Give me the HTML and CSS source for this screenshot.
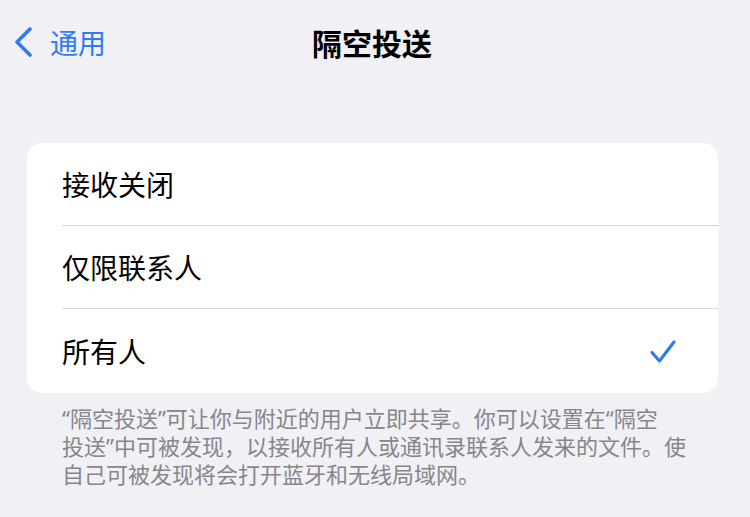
FILE: index.html
```html
<!DOCTYPE html>
<html lang="zh-CN">
<head>
  <meta charset="UTF-8" />
  <meta name="viewport" content="width=device-width, initial-scale=1.0" />
  <title>隔空投送</title>
  <link rel="stylesheet" href="styles.css">
</head>
<body>
  <header class="nav">
    <a class="back" href="#">
      <svg class="chevron" viewBox="0 0 20 30" width="20" height="30">
        <path d="M17 2 L4 15 L17 28" fill="none" stroke="currentColor" stroke-width="3.6" stroke-linecap="round" stroke-linejoin="round"/>
      </svg>
      <span>通用</span>
    </a>
    <h1>隔空投送</h1>
    <div></div>
  </header>

  <main class="content">
    <ul class="group">
      <li class="row"><div class="row-inner">接收关闭</div></li>
      <li class="row"><div class="row-inner">仅限联系人</div></li>
      <li class="row selected">
        <div class="row-inner">
          所有人
          <svg class="check" viewBox="0 0 28 25" width="28" height="25">
            <path d="M3 13.5 L10.5 22 L25 3" fill="none" stroke="currentColor" stroke-width="3.2" stroke-linecap="round" stroke-linejoin="round"/>
          </svg>
        </div>
      </li>
    </ul>
    <p class="footnote">“隔空投送”可让你与附近的用户立即共享。你可以设置在“隔空<br>投送”中可被发现，以接收所有人或通讯录联系人发来的文件。使<br>自己可被发现将会打开蓝牙和无线局域网。</p>
  </main>
</body>
</html>
```

FILE: styles.css
```css
* {
  box-sizing: border-box;
  margin: 0;
  padding: 0;
}
body {
  background: #f0f0f5;
  font-family: "Noto Sans CJK SC", "Noto Sans", sans-serif;
  color: #000;
}
.nav {
  height: 84px;
  display: grid;
  grid-template-columns: 1fr auto 1fr;
  align-items: center;
}
.back {
  display: flex;
  align-items: center;
  gap: 17px;
  padding-left: 13px;
  color: #2f7bf5;
  text-decoration: none;
  font-size: 28px;
}
.chevron {
  display: block;
}
.nav h1 {
  font-size: 30px;
  font-weight: 600;
  margin-right: 6px;
}
.content {
  padding: 59px 32px 0 27px;
}
.group {
  list-style: none;
  background: #fff;
  border-radius: 15px;
  overflow: hidden;
}
.row {
  padding-left: 35px;
}
.row-inner {
  height: 83px;
  display: flex;
  align-items: center;
  justify-content: space-between;
  padding-right: 41px;
  font-size: 28px;
  border-bottom: 1px solid #d6d6da;
}
.row:last-child .row-inner {
  border-bottom: none;
  height: 84px;
}
.check {
  color: #2f7bf5;
  display: block;
}
.footnote {
  padding: 11px 0 0 35px;
  font-size: 22px;
  line-height: 28px;
  color: #86868b;
  font-family: "Noto Sans", "Noto Sans CJK SC", sans-serif;
}
```
